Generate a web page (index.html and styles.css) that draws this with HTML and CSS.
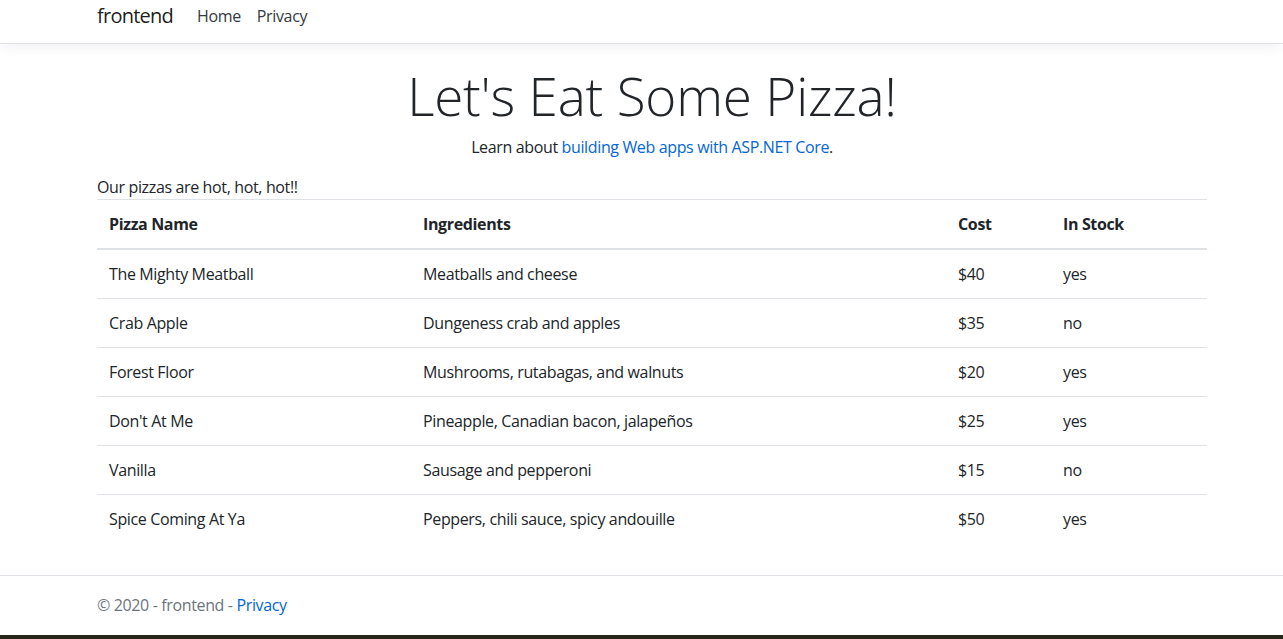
FILE: index.html
```html
<!DOCTYPE html>
<html lang="en">
<head>
<meta charset="utf-8">
<title>frontend</title>
<link rel="stylesheet" href="styles.css">
</head>
<body>
<header class="site-header">
  <nav class="navbar">
    <div class="container nav-inner">
      <a class="brand" href="#">frontend</a>
      <ul class="nav-links">
        <li><a href="#">Home</a></li>
        <li><a href="#">Privacy</a></li>
      </ul>
    </div>
  </nav>
</header>
<div class="container">
  <main class="main">
    <div class="intro">
      <h1 class="display">Let's Eat Some Pizza!</h1>
      <p class="lead-line">Learn about <a href="#">building Web apps with ASP.NET Core</a>.</p>
    </div>
    <p class="tagline">Our pizzas are hot, hot, hot!!</p>
    <table class="pizza-table">
      <thead>
        <tr><th class="c1">Pizza Name</th><th class="c2">Ingredients</th><th class="c3">Cost</th><th class="c4">In Stock</th></tr>
      </thead>
      <tbody>
        <tr><td>The Mighty Meatball</td><td>Meatballs and cheese</td><td>$40</td><td>yes</td></tr>
        <tr><td>Crab Apple</td><td>Dungeness crab and apples</td><td>$35</td><td>no</td></tr>
        <tr><td>Forest Floor</td><td>Mushrooms, rutabagas, and walnuts</td><td>$20</td><td>yes</td></tr>
        <tr><td>Don't At Me</td><td>Pineapple, Canadian bacon, jalapeños</td><td>$25</td><td>yes</td></tr>
        <tr><td>Vanilla</td><td>Sausage and pepperoni</td><td>$15</td><td>no</td></tr>
        <tr><td>Spice Coming At Ya</td><td>Peppers, chili sauce, spicy andouille</td><td>$50</td><td>yes</td></tr>
      </tbody>
    </table>
  </main>
</div>
<footer class="footer">
  <div class="container">&copy; 2020 - frontend - <a href="#">Privacy</a></div>
</footer>
<div class="desk-strip"></div>
</body>
</html>
```
FILE: styles.css
```css
* { box-sizing: border-box; }
html, body { margin: 0; padding: 0; }
body {
  font-family: "Segoe UI", "Open Sans", "Noto Sans", sans-serif;
  font-size: 16px;
  line-height: 1.5;
  letter-spacing: -0.36px;
  color: #212529;
  background: #fff;
}
a { color: #0366d6; text-decoration: none; }
.container {
  width: 1110px;
  margin-left: 97px;
}
.site-header { margin-bottom: 16px; }
.navbar {
  height: 44px;
  border-bottom: 1px solid #dee2e6;
  box-shadow: 0 4px 12px rgba(0,0,0,.05);
  background: #fff;
}
.nav-inner { display: flex; align-items: flex-start; height: 43px; padding-top: 1px; }
.brand { font-size: 20px; letter-spacing: -0.75px; color: rgba(0,0,0,.9); margin-right: 16px; line-height: 30px; }
.nav-links { display: flex; list-style: none; margin: 0; padding: 0; }
.nav-links a { display: block; color: #343a40; padding: 3px 8px; line-height: 24px; }
.main { padding-bottom: 16px; }
.intro { text-align: center; }
.display {
  font-size: 53px;
  font-weight: 300;
  line-height: 67px;
  letter-spacing: -0.2px;
  margin: 0 0 8px;
  padding-top: 2px;
  height: 67px;
}
.lead-line { margin: 0 0 16px; }
.tagline { margin: 0; }
.pizza-table { width: 100%; border-collapse: collapse; margin-bottom: 16px; }
.pizza-table th, .pizza-table td {
  padding: 12px;
  text-align: left;
  vertical-align: top;
  border-top: 1px solid #dee2e6;
}
.pizza-table th { font-weight: 700; border-bottom: 2px solid #dee2e6; }
.c1 { width: 314px; }
.c2 { width: 535px; }
.c3 { width: 105px; }
.c4 { width: 156px; }
.footer {
  border-top: 1px solid #dee2e6;
  line-height: 59px;
  color: #6c757d;
  white-space: nowrap;
}
.desk-strip { height: 4px; background: #262719; }
```
